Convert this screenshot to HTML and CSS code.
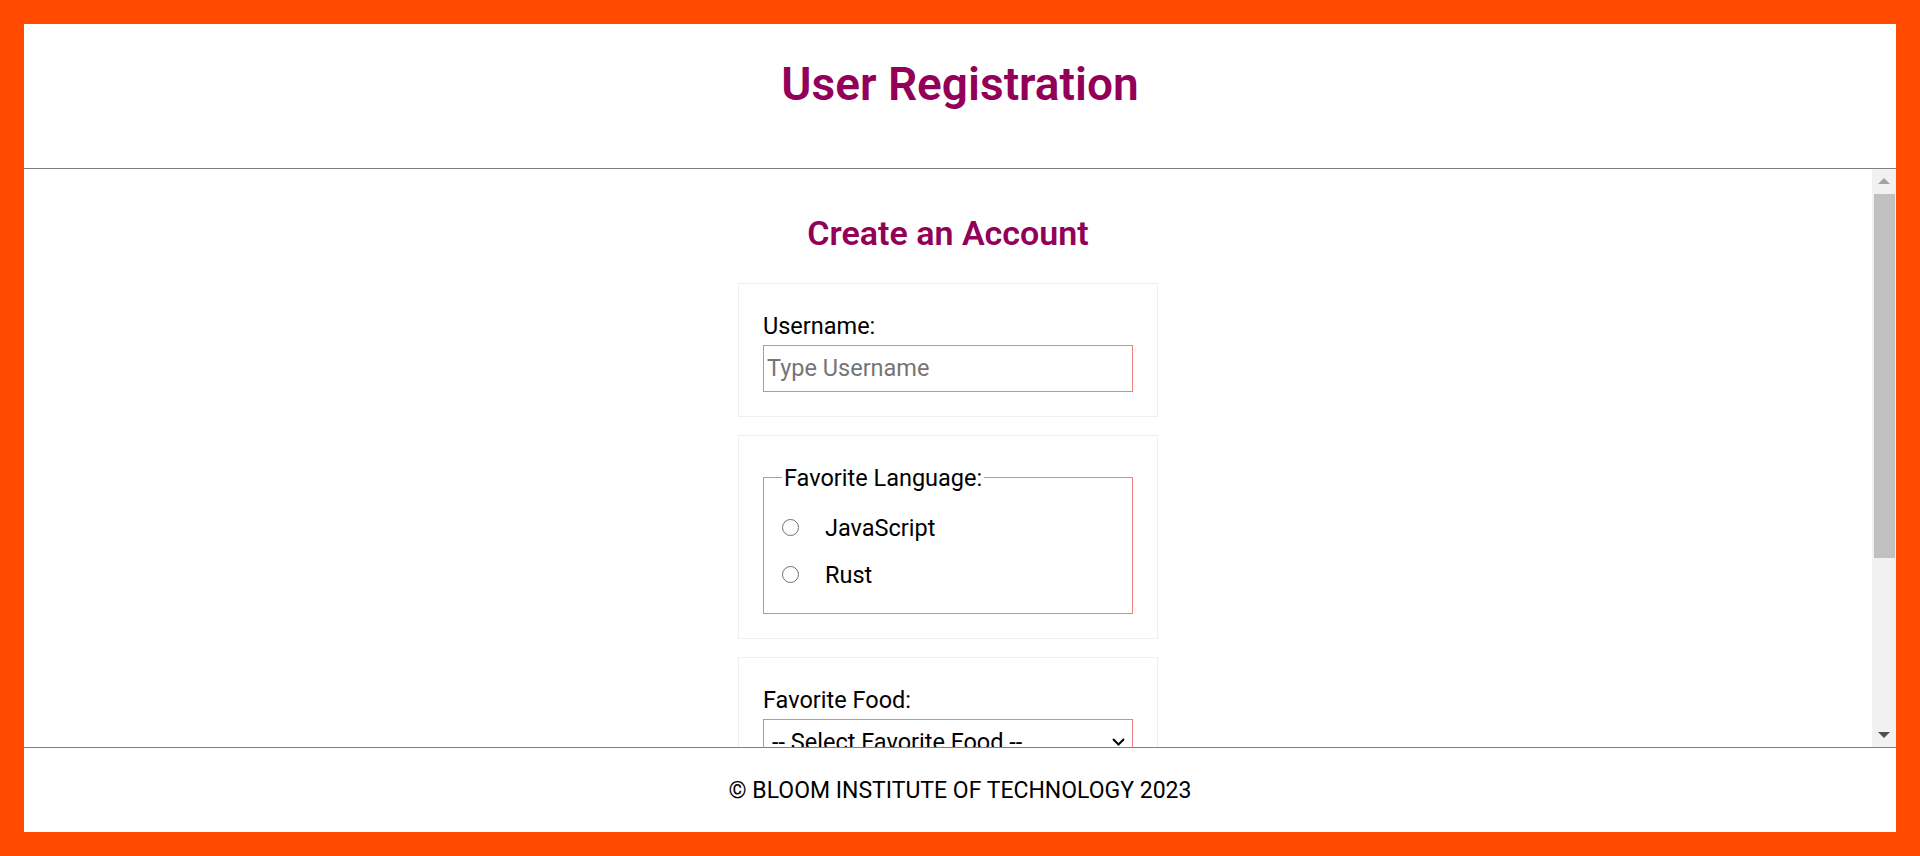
FILE: index.html
```html
<!DOCTYPE html>
<html lang="en">
<head>
<meta charset="utf-8">
<title>User Registration</title>
<link rel="stylesheet" href="styles.css">
</head>
<body>
  <header class="site-header">
    <h1 class="site-title">User Registration</h1>
  </header>
  <div class="viewport">
    <main class="content">
      <h2 class="form-title">Create an Account</h2>
      <form class="form">
        <div class="card">
          <label class="field-label" for="username">Username:</label>
          <input class="text-input" id="username" type="text" placeholder="Type Username">
        </div>
        <div class="card">
          <fieldset class="choice-set">
            <legend class="choice-legend">Favorite Language:</legend>
            <label class="option"><input class="radio" type="radio" name="lang" value="javascript"><span>JavaScript</span></label>
            <label class="option"><input class="radio" type="radio" name="lang" value="rust"><span>Rust</span></label>
          </fieldset>
        </div>
        <div class="card">
          <label class="field-label" for="food">Favorite Food:</label>
          <select class="select-input" id="food">
            <option>-- Select Favorite Food --</option>
            <option>Pizza</option>
            <option>Spaghetti</option>
            <option>Broccoli</option>
          </select>
        </div>
        <div class="card">
          <label class="option"><input class="check" type="checkbox"><span>Agree to our terms</span></label>
          <button class="submit" type="button">Submit</button>
        </div>
      </form>
    </main>
    <div class="scrollbar" aria-hidden="true">
      <div class="sb-button">
        <svg width="12" height="6" viewBox="0 0 12 6"><polygon points="6,0 12,6 0,6" fill="#a3a3a3"/></svg>
      </div>
      <div class="sb-track">
        <div class="sb-thumb"></div>
      </div>
      <div class="sb-button">
        <svg width="12" height="6" viewBox="0 0 12 6"><polygon points="0,0 12,0 6,6" fill="#505050"/></svg>
      </div>
    </div>
  </div>
  <footer class="site-footer">© BLOOM INSTITUTE OF TECHNOLOGY 2023</footer>
</body>
</html>
```
FILE: styles.css
```css
* { box-sizing: border-box; }

html, body {
  margin: 0;
  height: 100%;
}

body {
  height: 856px;
  border: 24px solid #ff4a00;
  background: #ffffff;
  display: flex;
  flex-direction: column;
  font-family: Roboto, "Noto Sans", sans-serif;
  color: #000;
  overflow: hidden;
}

.site-header {
  flex: 0 0 auto;
  height: 145px;
  padding-top: 24px;
  border-bottom: 1px solid #808080;
  text-align: center;
}

.site-title {
  margin: 0;
  font-size: 46px;
  line-height: 73px;
  font-weight: 600;
  color: #930059;
}

.viewport {
  flex: 1 1 auto;
  min-height: 0;
  display: flex;
}

.content {
  flex: 1 1 auto;
  min-width: 0;
  overflow: hidden;
  padding: 13px 0 57px;
}

.scrollbar {
  flex: 0 0 24px;
  display: flex;
  flex-direction: column;
  background: #f1f1f1;
}

.sb-button {
  flex: 0 0 24px;
  display: flex;
  align-items: center;
  justify-content: center;
}

.sb-button svg { display: block; }

.sb-track {
  flex: 1 1 auto;
  padding: 1px 1px 0 2px;
}

.sb-thumb {
  height: 364px;
  background: #c1c1c1;
}

.form-title {
  margin: 24px 0 22px;
  text-align: center;
  font-size: 34px;
  line-height: 55px;
  font-weight: 600;
  color: #930059;
}

.form {
  display: flex;
  flex-direction: column;
  align-items: center;
  gap: 18px;
}

.card {
  width: 420px;
  padding: 24px;
  border: 1px solid #efefef;
  background: #fff;
  font-size: 23.5px;
  line-height: 36.5px;
}

.field-label {
  display: block;
  font-size: 23.5px;
  line-height: 36.5px;
}

.text-input,
.select-input {
  display: block;
  width: 100%;
  height: 47px;
  margin: 0;
  border: 1px solid #f08080;
  border-radius: 0;
  background-color: #fff;
  font-family: Roboto, "Noto Sans", sans-serif;
  font-size: 23.5px;
  color: #000;
  outline: none;
}

.text-input {
  padding: 0 3px;
}

.text-input::placeholder {
  color: #757575;
}

.select-input {
  appearance: none;
  -webkit-appearance: none;
  padding: 0 8px;
  background-image: url("data:image/svg+xml;utf8,<svg xmlns='http://www.w3.org/2000/svg' width='13' height='8' viewBox='0 0 13 8'><polyline points='1,1 6.5,6.5 12,1' fill='none' stroke='%23000' stroke-width='2'/></svg>");
  background-repeat: no-repeat;
  background-position: right 7px center;
}

.choice-set {
  margin: 0;
  border: 1px solid #f08080;
  padding: 8.4px 18px 15px;
}

.choice-legend {
  padding: 0 2px;
  font-size: 23.5px;
  line-height: 36.5px;
}

.option {
  display: flex;
  align-items: center;
  height: 47px;
}

.radio,
.check {
  appearance: none;
  -webkit-appearance: none;
  width: 17px;
  height: 17px;
  margin: 0 26px 0 0;
  flex: 0 0 auto;
  border: 1px solid #6f6f6f;
  background: #fff;
}

.radio {
  border-radius: 50%;
}

.check {
  border-radius: 2px;
}

.submit {
  margin-top: 12px;
  width: 100%;
  height: 47px;
  border: 1px solid #f08080;
  background: #fff;
  font-family: Roboto, "Noto Sans", sans-serif;
  font-size: 23.5px;
}

.site-footer {
  flex: 0 0 85px;
  border-top: 1px solid #808080;
  display: flex;
  align-items: center;
  justify-content: center;
  font-size: 23px;
  font-weight: 400;
}
```
